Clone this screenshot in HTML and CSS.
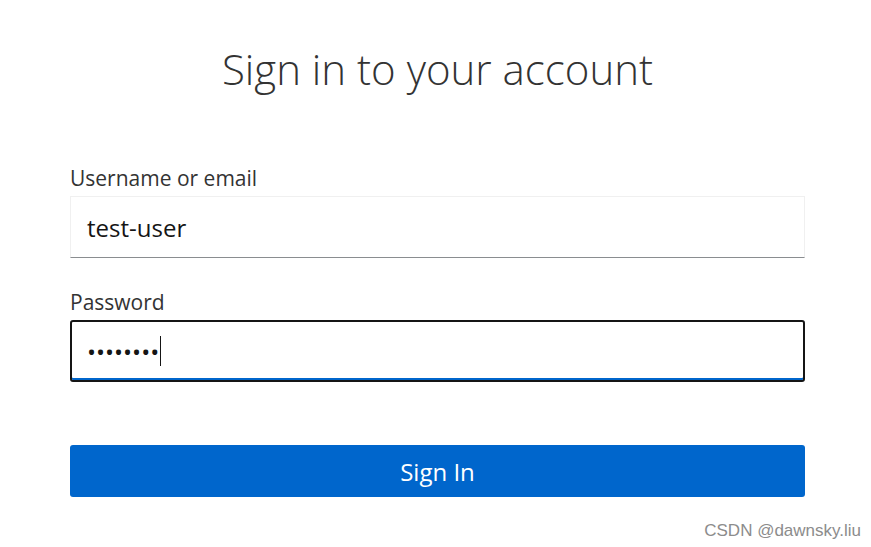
FILE: index.html
```html
<!DOCTYPE html>
<html lang="en">
<head>
  <meta charset="UTF-8" />
  <meta name="viewport" content="width=device-width, initial-scale=1.0"/>
  <title>Sign in to your account</title>
  <link rel="stylesheet" href="styles.css">
</head>
<body>
  <div class="login">
    <h1 class="title">Sign in to your account</h1>

    <form class="form" onsubmit="return false">
      <div class="group">
        <label for="username">Username or email</label>
        <div class="field">test-user</div>
      </div>

      <div class="group">
        <label for="password">Password</label>
        <div class="field focused">
          <span class="dots">&bull;&bull;&bull;&bull;&bull;&bull;&bull;&bull;</span><span class="caret"></span>
        </div>
      </div>

      <button class="submit" type="submit">Sign In</button>
    </form>
  </div>

  <div class="watermark">CSDN @dawnsky.liu</div>
</body>
</html>
```

FILE: styles.css
```css
body {
  margin: 0;
  background: #fff;
  font-family: 'Open Sans', 'Noto Sans', sans-serif;
  color: #151515;
}

/* 로그인 영역 */
.login {
  width: 735px;
  margin-left: 70px;
  padding-top: 44px;
}

.title {
  margin: 0;
  font-size: 42px;
  font-weight: 300;
  line-height: 50px;
  text-align: center;
  color: #333;
}

.form {
  margin-top: 70px;
}

.group {
  margin-bottom: 30px;
}

.group label {
  display: block;
  font-size: 21px;
  line-height: 28px;
  color: #333;
  margin-bottom: 4px;
}

/* 입력 필드 */
.field {
  box-sizing: border-box;
  height: 62px;
  padding: 0 16px;
  display: flex;
  align-items: center;
  font-size: 24px;
  color: #151515;
  border: 1px solid #f0f0f0;
  border-bottom-color: #8a8d90;
}

.field.focused {
  border: 2px solid #151515;
  border-radius: 3px;
  padding: 0 15px;
  box-shadow: inset 0 -2px 0 #0066cc;
}

.dots {
  font-size: 24px;
  letter-spacing: 0;
}

.caret {
  display: inline-block;
  width: 1px;
  height: 30px;
  background: #151515;
  margin-left: 1px;
}

/* 버튼 */
.submit {
  display: block;
  width: 100%;
  height: 52px;
  margin-top: 63px;
  border: none;
  border-radius: 3px;
  background: #0066cc;
  color: #fff;
  font-family: inherit;
  font-size: 24px;
  cursor: pointer;
}

.watermark {
  position: absolute;
  right: 10px;
  bottom: 6px;
  font-family: 'Liberation Sans', Arial, sans-serif;
  font-size: 17px;
  color: #8c8c8c;
}
```
